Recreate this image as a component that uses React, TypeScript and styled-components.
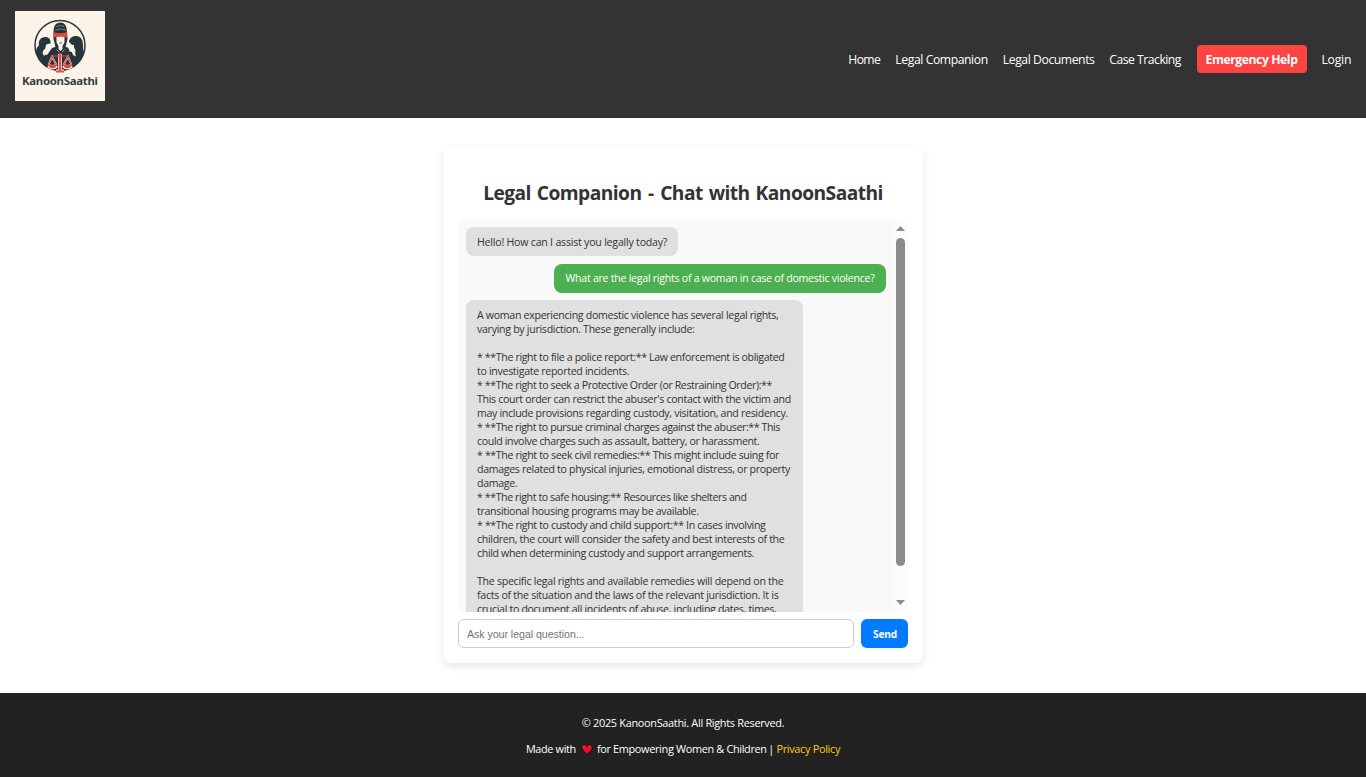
import React from "react";
import styled, { createGlobalStyle } from "styled-components";

const GlobalStyle = createGlobalStyle`
  *, *::before, *::after { box-sizing: border-box; }
  body {
    margin: 0;
    background: #fff;
    color: #333;
    font-family: "Segoe UI", "Open Sans", "Noto Sans", sans-serif;
  }
`;

const Page = styled.div`
  display: flex;
  flex-direction: column;
  height: 777px;
  overflow: hidden;
`;

const Header = styled.header`
  display: flex;
  justify-content: space-between;
  align-items: flex-start;
  height: 118px;
  padding: 11px 15px 0;
  background: #333;
`;

const LogoSvg = styled.svg`
  display: block;
  width: 90px;
  height: 90px;
`;

const Nav = styled.nav`
  display: flex;
  align-items: center;
  gap: 15px;
  height: 28px;
  margin-top: 34px;
`;

const NavLink = styled.a<{ $width: number; $spacing: number }>`
  width: ${(p) => p.$width}px;
  height: 28px;
  padding-top: 1px;
  color: #fff;
  font-size: 12.2px;
  line-height: 28px;
  letter-spacing: ${(p) => p.$spacing}px;
  white-space: nowrap;
  text-decoration: none;
`;

const EmergencyLink = styled(NavLink)`
  padding-left: 9px;
  border-radius: 4px;
  background: #ff4444;
  font-weight: 700;
`;

const Main = styled.main`
  display: flex;
  justify-content: center;
  align-items: flex-start;
  height: 575px;
  padding-top: 30px;
`;

const Card = styled.section`
  display: flex;
  flex-direction: column;
  width: 480px;
  height: 515px;
  padding: 0 15px 15px;
  border-radius: 8px;
  background: #fff;
  box-shadow: 0 3px 8px rgba(0, 0, 0, 0.1);
`;

const Title = styled.h2`
  height: 72px;
  margin: 0;
  padding-top: 32px;
  font-size: 19.2px;
  font-weight: 700;
  line-height: 26px;
  letter-spacing: -0.55px;
  word-spacing: 1.5px;
  text-align: center;
  white-space: nowrap;
`;

const Dash = styled.span`
  margin: 0 0.6px;
`;

const ChatBox = styled.div`
  display: flex;
  height: 392px;
  overflow: hidden;
  border-radius: 6px;
  background: #f9f9f9;
`;

const Messages = styled.div`
  display: flex;
  flex: 1;
  flex-direction: column;
  gap: 8px;
  padding: 7px 7px 0 8px;
`;

const Bubble = styled.div<{ $user?: boolean; $width: number }>`
  flex-shrink: 0;
  align-self: ${(p) => (p.$user ? "flex-end" : "flex-start")};
  width: ${(p) => p.$width}px;
  padding: ${(p) => (p.$user ? "7px 11px 8px 11.5px" : "8px 11px 7px")};
  border-radius: 8px;
  background: ${(p) => (p.$user ? "#4caf50" : "#e0e0e0")};
  color: ${(p) => (p.$user ? "#fff" : "#333")};
`;

const LongBubble = styled(Bubble)`
  margin-top: -1px;
`;

const Line = styled.div<{ $spacing: number }>`
  height: 14px;
  font-size: 10.6px;
  line-height: 14px;
  letter-spacing: ${(p) => p.$spacing - 0.008}px;
  white-space: nowrap;
`;

const Scrollbar = styled.div`
  display: flex;
  flex-direction: column;
  align-items: center;
  width: 15px;
  padding: 6px 0 7px;
  background: #fcfcfc;
`;

const ScrollArrow = styled.svg`
  display: block;
  width: 9px;
  height: 5px;
`;

const ScrollThumb = styled.div`
  width: 9px;
  height: 328px;
  margin: 7px 0 34px;
  border-radius: 5px;
  background: #8b8b8b;
`;

const Composer = styled.div`
  display: flex;
  gap: 7px;
  height: 29px;
  margin-top: 7px;
`;

const QuestionInput = styled.input`
  width: 396px;
  padding: 1px 8px 0;
  border: 1px solid #ccc;
  border-radius: 6px;
  outline: none;
  font-family: Arial, "Liberation Sans", sans-serif;
  font-size: 10.67px;
  letter-spacing: -0.06px;

  &::placeholder { color: #757575; opacity: 1; }
`;

const SendButton = styled.button`
  width: 47px;
  padding: 0 0 0 1px;
  border: 0;
  border-radius: 6px;
  background: #007bff;
  color: #fff;
  font-family: "Segoe UI", "Open Sans", sans-serif;
  font-size: 10.2px;
  font-weight: 700;
  letter-spacing: -0.2px;
`;

const Footer = styled.footer`
  display: flex;
  flex-direction: column;
  align-items: center;
  gap: 12px;
  height: 84px;
  padding-top: 23px;
  background: #222;
  color: #fff;
`;

const FooterLine = styled.div`
  display: flex;
  align-items: center;
  height: 14px;
`;

const FooterText = styled.span<{ $spacing: number }>`
  font-size: 10.9px;
  line-height: 14px;
  letter-spacing: ${(p) => p.$spacing}px;
  white-space: nowrap;
`;

const PolicyLink = styled.a`
  margin-left: 2.5px;
  color: #ffcc00;
  font-size: 10.9px;
  line-height: 14px;
  letter-spacing: -0.31px;
  white-space: nowrap;
  text-decoration: none;
`;

const Divider = styled(FooterText)`
  margin-left: 1.5px;
`;

const HeartIcon = styled.svg`
  width: 12px;
  height: 11px;
  margin: 0 4px 0 5px;
`;

const answer: [string, number][] = [
  ["A woman experiencing domestic violence has several legal rights,", -0.294],
  ["varying by jurisdiction. These generally include:", -0.281],
  ["", 0],
  ["* **The right to file a police report:** Law enforcement is obligated", -0.349],
  ["to investigate reported incidents.", -0.303],
  ["* **The right to seek a Protective Order (or Restraining Order):**", -0.373],
  ["This court order can restrict the abuser's contact with the victim and", -0.308],
  ["may include provisions regarding custody, visitation, and residency.", -0.305],
  ["* **The right to pursue criminal charges against the abuser:** This", -0.394],
  ["could involve charges such as assault, battery, or harassment.", -0.347],
  ["* **The right to seek civil remedies:** This might include suing for", -0.344],
  ["damages related to physical injuries, emotional distress, or property", -0.32],
  ["damage.", -0.292],
  ["* **The right to safe housing:** Resources like shelters and", -0.396],
  ["transitional housing programs may be available.", -0.315],
  ["* **The right to custody and child support:** In cases involving", -0.343],
  ["children, the court will consider the safety and best interests of the", -0.303],
  ["child when determining custody and support arrangements.", -0.337],
  ["", 0],
  ["The specific legal rights and available remedies will depend on the", -0.268],
  ["facts of the situation and the laws of the relevant jurisdiction. It is", -0.27],
  ["crucial to document all incidents of abuse, including dates, times,", -0.309],
];

function Logo() {
  return (
    <LogoSvg viewBox="0 0 90 90" role="img" aria-label="KanoonSaathi">
      <defs>
        <clipPath id="badge"><circle cx="45" cy="34.5" r="25" /></clipPath>
      </defs>
      <rect width="90" height="90" fill="#fcf4e8" />
      <g clipPath="url(#badge)">
        {/* shoulders */}
        <path d="M18 62V44l8-3 6 3 5-7 6-2h5l6 2 5 7 5-3 8 3v18z" fill="#26343d" />
        {/* woman on the left, facing right */}
        <path d="M29 32l5.500.5.5 2.500 1 2.200-1 .6-.4 2.500-2.600.5-.5 2.500-2.500 1.500-2-3 1-4z" fill="#fcf4e8" />
        <path d="M24 34.500c-1-5 2-8.500 6-8.500s6 2.500 5.500 6.500c-2 .3-3.500.3-4.500 1.500l-.8 3.500-2.200 2.500-1 5-5 1c-1.500-4-1.500-9 2-11.500z" fill="#26343d" />
        {/* woman on the right, facing left */}
        <path d="M61 30.500l-6.500 1-.5 3-1.200 2.700 1.200.6.3 2.700 2.700.5 1 3 3 1.500 1.500-5-1.500-6z" fill="#fcf4e8" />
        <path d="M54 31.500c0-4 3-6.500 7-6.500 5 0 7 4 7 9s1 8 1 13h-7c-2-3-2-5-1.500-7.500-1.200-2-1.700-3.500-1.500-5.500-2 .3-3.500-1-4-2.500z" fill="#26343d" />
        {/* central figure */}
        <path d="M38.500 22c0-7 2-10.500 6.800-10.500S52 15 52 22l.5 6-2 8h-10l-2-8z" fill="#26343d" />
        <path d="M41.500 25h8v6.500l-2 3.500v3l-2 2-2-2v-3l-2-3.500z" fill="#fcf4e8" />
        <path d="M41.500 15.500q4-1.800 8 0M40.500 19q5-2 10 0" fill="none" stroke="#9ba19f" strokeWidth=".7" />
        <path d="M38.700 21.300q6.800 1.800 13.600 0v5q-6.800-1.200-13.600 0z" fill="#e0493f" />
        <path d="M44.200 32h2.700" stroke="#26343d" strokeWidth=".8" />
        <path d="M41.500 38.500l2.500 2.500M49.500 38.500L47 41" stroke="#fcf4e8" strokeWidth=".6" />
      </g>
      <circle cx="45" cy="34.5" r="25" fill="none" stroke="#26343d" strokeWidth="1.5" />
      {/* scales of justice */}
      <path d="M45 43v17M41 60.500h8M33.500 54.500q4 4 8 0M48.500 54.500q4 4 8 0" fill="none" stroke="#fcf4e8" strokeWidth="4" />
      <path d="M33.500 54L37 45.500l4.500 8.500M48.500 54l4.500-8.500 3.500 8.500" fill="none" stroke="#fcf4e8" strokeWidth="1.8" />
      <path d="M43.700 42h2.600v17.500h-2.600zM41 59.500h8v2h-8z" fill="#df5146" />
      <path d="M36 45h18M33.500 54L37 45.500l4.500 8.500M48.500 54l4.500-8.500 3.500 8.500" fill="none" stroke="#df5146" strokeWidth="1.200" />
      <path d="M33 53.500h9q-1 4-4.500 4t-4.500-4zM48 53.500h9q-1 4-4.500 4t-4.500-4z" fill="#df5146" />
      <text x="7" y="74" textLength="76" fill="#333e43" fontFamily="Noto Sans, sans-serif" fontSize="11.4" fontWeight="700">
        KanoonSaathi
      </text>
    </LogoSvg>
  );
}

export default function App() {
  return (
    <Page>
      <GlobalStyle />
      <Header>
        <Logo />
        <Nav>
          <NavLink $width={32} $spacing={-0.65}>Home</NavLink>
          <NavLink $width={92.5} $spacing={-0.42}>Legal Companion</NavLink>
          <NavLink $width={91.5} $spacing={-0.43}>Legal Documents</NavLink>
          <NavLink $width={72.2} $spacing={-0.5}>Case Tracking</NavLink>
          <EmergencyLink $width={110} $spacing={-0.43}>Emergency Help</EmergencyLink>
          <NavLink $width={29.5} $spacing={-0.25}>Login</NavLink>
        </Nav>
      </Header>

      <Main>
        <Card>
          <Title>Legal Companion <Dash>-</Dash> Chat with KanoonSaathi</Title>
          <ChatBox>
            <Messages>
              <Bubble $width={212}>
                <Line $spacing={-0.21}>Hello! How can I assist you legally today?</Line>
              </Bubble>
              <Bubble $user $width={332}>
                <Line $spacing={-0.254}>What are the legal rights of a woman in case of domestic violence?</Line>
              </Bubble>
              <LongBubble $width={337}>
                {answer.map(([text, spacing], i) => (
                  <Line key={i} $spacing={spacing}>{text}</Line>
                ))}
              </LongBubble>
            </Messages>
            <Scrollbar>
              <ScrollArrow viewBox="0 0 9 5"><path d="M4.5 0L9 5H0z" fill="#8b8b8b" /></ScrollArrow>
              <ScrollThumb />
              <ScrollArrow viewBox="0 0 9 5"><path d="M4.5 5L9 0H0z" fill="#8b8b8b" /></ScrollArrow>
            </Scrollbar>
          </ChatBox>
          <Composer>
            <QuestionInput placeholder="Ask your legal question..." />
            <SendButton>Send</SendButton>
          </Composer>
        </Card>
      </Main>

      <Footer>
        <FooterLine>
          <FooterText $spacing={-0.298}>© 2025 KanoonSaathi. All Rights Reserved.</FooterText>
        </FooterLine>
        <FooterLine>
          <FooterText $spacing={-0.358}>Made with</FooterText>
          <HeartIcon viewBox="0 0 12 11">
            <path d="M6 10.3C3.5 8.3.8 6.3.8 3.6.8 1.8 2 .8 3.4.8 4.6.8 5.5 1.4 6 2.4 6.5 1.4 7.4.8 8.6.8 10 .8 11.2 1.8 11.2 3.6 11.2 6.3 8.5 8.3 6 10.3z" fill="#e81123" stroke="#120506" strokeWidth=".8" />
            <path d="M2.2 3.5q.2-1.3 1.4-1.4" fill="none" stroke="#ff7a80" strokeWidth=".7" />
          </HeartIcon>
          <FooterText $spacing={-0.33}>for Empowering Women &amp; Children</FooterText>
          <Divider $spacing={-0.3}>|</Divider>
          <PolicyLink>Privacy Policy</PolicyLink>
        </FooterLine>
      </Footer>
    </Page>
  );
}
